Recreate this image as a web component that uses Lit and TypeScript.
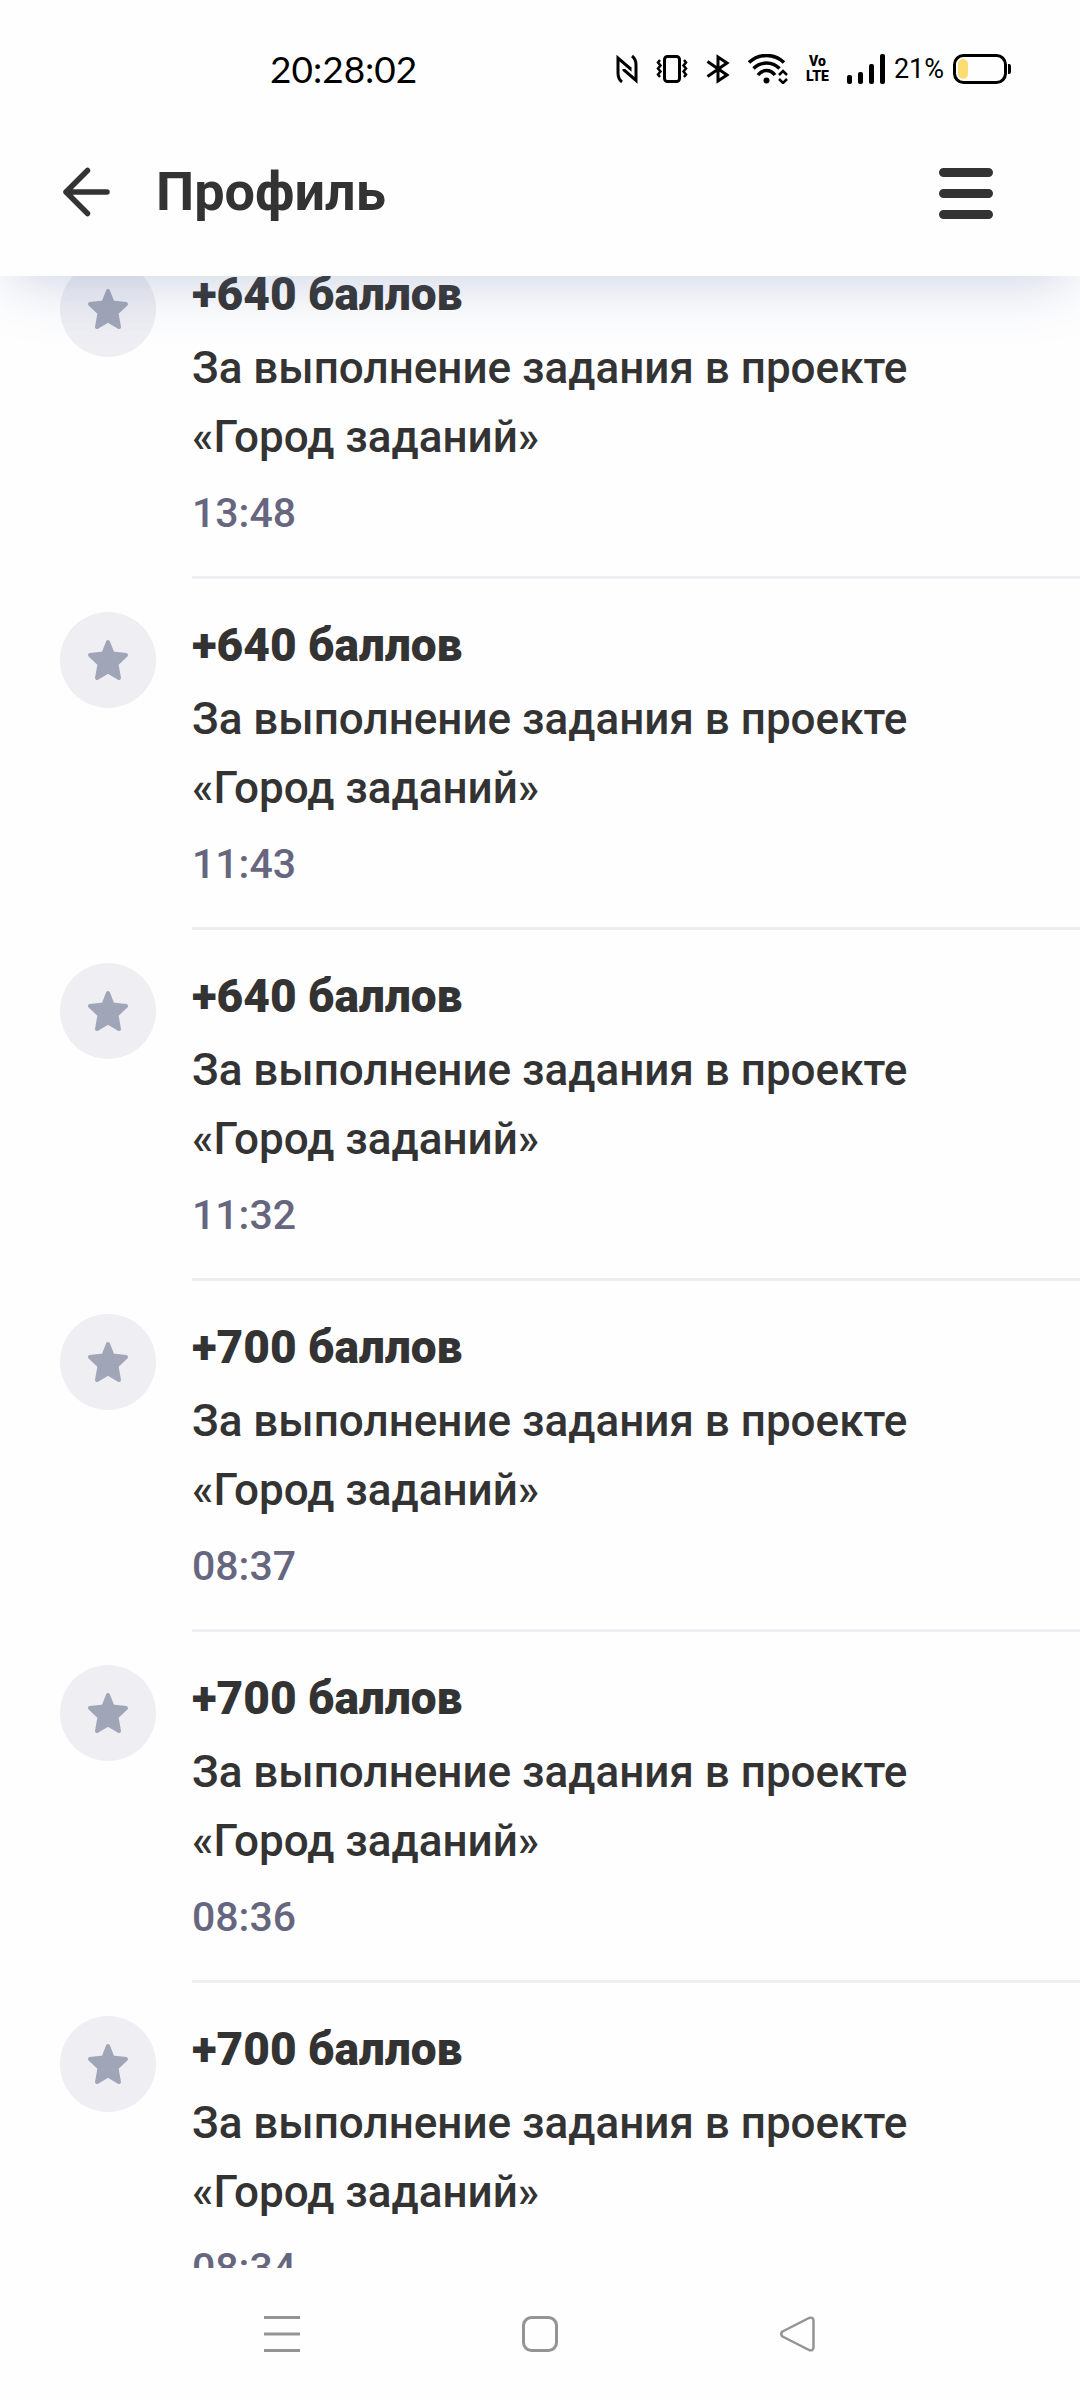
import { LitElement, html, css, svg } from "lit";
import { customElement, property, state } from "lit/decorators.js";

interface Reward {
  points: number;
  reason: string;
  time: string;
}

const REASON = "За выполнение задания в проекте «Город заданий»";

@customElement("status-bar")
class StatusBar extends LitElement {
  static styles = css`
    :host {
      display: flex;
      align-items: center;
      justify-content: space-between;
      box-sizing: border-box;
      height: 138px;
      padding: 0 69px 0 270px;
      color: #000;
    }
    .clock {
      font: 400 37px/48px Lato, sans-serif;
    }
    .icons,
    .power {
      display: flex;
      align-items: center;
    }
    .icons {
      gap: 18px;
    }
    .power {
      gap: 9px;
    }
    svg {
      display: block;
      fill: none;
      stroke: currentColor;
      stroke-width: 3;
    }
    .solid {
      fill: currentColor;
      stroke: none;
    }
    .charge {
      fill: #ffdc73;
      stroke: none;
    }
    .volte {
      display: grid;
      font: 900 14px/15px Roboto, sans-serif;
      text-align: center;
    }
    .percent {
      font: 400 27px/30px Roboto, sans-serif;
    }
  `;

  render() {
    return html`
      <time class="clock">20:28:02</time>
      <div class="icons">
        <svg width="22" height="30" viewBox="0 0 22 30" role="img" aria-label="NFC">
          <path d="M6 28 Q2 25 2 19 V4 L14 14.500 V13 M8 15 V16 L20 26.500 V11 Q20 5 16 2" />
        </svg>
        <svg width="32" height="30" viewBox="0 0 32 30" role="img" aria-label="Вибрация">
          <rect x="8.500" y="2.500" width="15" height="25" rx="3" />
          <path d="M4 6 L2 8.500 L4.500 11.500 L2 14.500 L4.500 17.500 L2 20.500 L4 23 M28 6 L30 8.500 L27.500 11.500 L30 14.500 L27.500 17.500 L30 20.500 L28 23" stroke-width="2.500" />
        </svg>
        <svg width="24" height="30" viewBox="0 0 24 30" role="img" aria-label="Bluetooth">
          <path d="M1.500 7.500 L21 21 L12 27 V3 L21 9 L1.500 22.500" />
        </svg>
        <svg width="40" height="30" viewBox="0 0 40 30" role="img" aria-label="Wi-Fi">
          <path d="M1 8.500 Q8.500 1.500 18.500 1.500 T36 8.500 M5.500 14.500 Q11 9 18.500 9 T31.500 14.500 M10 21 Q13.500 16.500 18.500 16.500 T27 21" stroke-width="3.500" />
          <circle class="solid" cx="18.500" cy="26.500" r="3" />
          <path d="M31 21 L35 17 L39 21 M31 25 L35 29 L39 25" stroke-width="2.500" />
        </svg>
        <div class="volte"><span>Vo</span><span>LTE</span></div>
        <div class="power">
          <svg width="38" height="30" viewBox="0 0 38 30" role="img" aria-label="Сигнал">
            <rect class="solid" x="0" y="21" width="5" height="9" rx="2" />
            <rect class="solid" x="11" y="18" width="5" height="12" rx="2" />
            <rect class="solid" x="22" y="10" width="5" height="20" rx="2" />
            <rect class="solid" x="33" y="0" width="5" height="30" rx="2" />
          </svg>
          <span class="percent">21%</span>
          <svg width="58" height="30" viewBox="0 0 58 30" role="img" aria-label="Батарея">
            <rect x="1.500" y="1.500" width="51" height="27" rx="9" />
            <rect class="charge" x="5" y="5" width="10" height="20" rx="5" />
            <path class="solid" d="M55 10 h1 q2 0 2 2 v6 q0 2 -2 2 h-1 z" />
          </svg>
        </div>
      </div>
    `;
  }
}

@customElement("app-header")
class AppHeader extends LitElement {
  @property() heading = "";

  static styles = css`
    :host {
      display: flex;
      align-items: center;
      box-sizing: border-box;
      height: 138px;
      padding: 0 87px 30px 60px;
      color: #333;
    }
    h1 {
      flex: 1;
      margin: 0 0 0 42px;
      font: 700 54px/66px Roboto, sans-serif;
    }
    button {
      display: block;
      padding: 0;
      border: 0;
      background: none;
      color: inherit;
    }
    svg {
      display: block;
      fill: none;
      stroke: currentColor;
      stroke-linecap: round;
      stroke-linejoin: round;
    }
  `;

  render() {
    return html`
      <button type="button" aria-label="Назад">
        <svg width="54" height="54" viewBox="0 0 54 54" stroke-width="5.500">
          <path d="M47 27 H6 M27.500 5.500 L6 27 L27.500 48.500" />
        </svg>
      </button>
      <h1>${this.heading}</h1>
      <button type="button" aria-label="Меню">
        <svg width="54" height="54" viewBox="0 0 54 54" stroke-width="9">
          <path d="M4.500 7.500 H49.500 M4.500 28.500 H49.500 M4.500 49.500 H49.500" />
        </svg>
      </button>
    `;
  }
}

@customElement("reward-item")
class RewardItem extends LitElement {
  @property({ attribute: false }) reward!: Reward;

  static styles = css`
    :host {
      display: flex;
      gap: 36px;
      padding-left: 60px;
      font-family: Roboto, sans-serif;
      color: #333;
    }
    .badge {
      display: grid;
      place-items: center;
      flex: none;
      width: 96px;
      height: 96px;
      margin-top: 33px;
      border-radius: 50%;
      background: #eeeef3;
    }
    .star {
      fill: #a0a5b8;
      stroke: #a0a5b8;
      stroke-width: 4;
      stroke-linejoin: round;
    }
    .body {
      display: grid;
      gap: 7px;
      flex: 1;
      padding: 33px 150px 28px 0;
      border-bottom: 3px solid #eeeef3;
    }
    h2,
    p {
      margin: 0;
    }
    h2 {
      font-size: 46px;
      font-weight: 900;
      line-height: 66px;
    }
    p {
      font-size: 44px;
      font-weight: 500;
      line-height: 69px;
    }
    time {
      font-size: 41px;
      font-weight: 500;
      line-height: 69px;
      color: #66667e;
    }
  `;

  render() {
    const { points, reason, time } = this.reward;
    return html`
      <div class="badge">
        <svg class="star" width="42" height="42" viewBox="0 0 42 42" aria-hidden="true">
          <path d="M21 3 L25.500 14.500 L39 16 L29.500 25 L32 39 L21 32.500 L10 39 L12.500 25 L3 16 L16.500 14.500 Z" />
        </svg>
      </div>
      <div class="body">
        <h2>+${points} баллов</h2>
        <p>${reason}</p>
        <time>${time}</time>
      </div>
    `;
  }
}

@customElement("system-nav")
class SystemNav extends LitElement {
  static styles = css`
    :host {
      display: flex;
      justify-content: center;
      height: 132px;
    }
    button {
      display: grid;
      place-items: center;
      flex: 0 1 258px;
      padding: 0;
      border: 0;
      background: none;
      color: #949494;
    }
    svg {
      fill: none;
      stroke: currentColor;
      stroke-width: 3;
      stroke-linejoin: round;
    }
  `;

  render() {
    const icons = [
      { label: "Недавние", shape: svg`<path d="M0 1.500 H36 M0 18 H36 M0 34.500 H36" />` },
      { label: "Домой", shape: svg`<rect x="1.500" y="1.500" width="33" height="33" rx="8" />` },
      {
        label: "Назад",
        shape: svg`<path d="M2.500 15.500 L29 2 Q33.500 0.500 33.500 5 V31 Q33.500 35.500 29 34 L2.500 20.500 Q0 18 2.500 15.500 Z" stroke-width="2.500" />`,
      },
    ];
    return icons.map(
      ({ label, shape }) => html`
        <button type="button" aria-label=${label}>
          <svg width="36" height="36" viewBox="0 0 36 36">${shape}</svg>
        </button>
      `
    );
  }
}

@customElement("app-root")
class AppRoot extends LitElement {
  @state() private rewards: Reward[] = [
    { points: 640, reason: REASON, time: "13:48" },
    { points: 640, reason: REASON, time: "11:43" },
    { points: 640, reason: REASON, time: "11:32" },
    { points: 700, reason: REASON, time: "08:37" },
    { points: 700, reason: REASON, time: "08:36" },
    { points: 700, reason: REASON, time: "08:34" },
  ];

  static styles = css`
    :host {
      display: flex;
      flex-direction: column;
      height: 100vh;
      background: #fefefe;
    }
    .top {
      position: relative;
      z-index: 1;
      background: #fefefe;
      box-shadow: 0 18px 54px -12px rgba(100, 120, 170, 0.32);
    }
    .feed {
      flex: 1;
      min-height: 0;
      overflow-y: auto;
      scrollbar-width: none;
    }
    .bottom {
      position: relative;
      z-index: 1;
      background: #fefefe;
    }
  `;

  firstUpdated() {
    // The feed opens already scrolled part of the way into its first entry.
    requestAnimationFrame(() => {
      this.renderRoot.querySelector(".feed")!.scrollTop = 48;
    });
  }

  render() {
    return html`
      <div class="top">
        <status-bar></status-bar>
        <app-header heading="Профиль"></app-header>
      </div>
      <main class="feed">
        ${this.rewards.map((r) => html`<reward-item .reward=${r}></reward-item>`)}
      </main>
      <system-nav class="bottom"></system-nav>
    `;
  }
}
